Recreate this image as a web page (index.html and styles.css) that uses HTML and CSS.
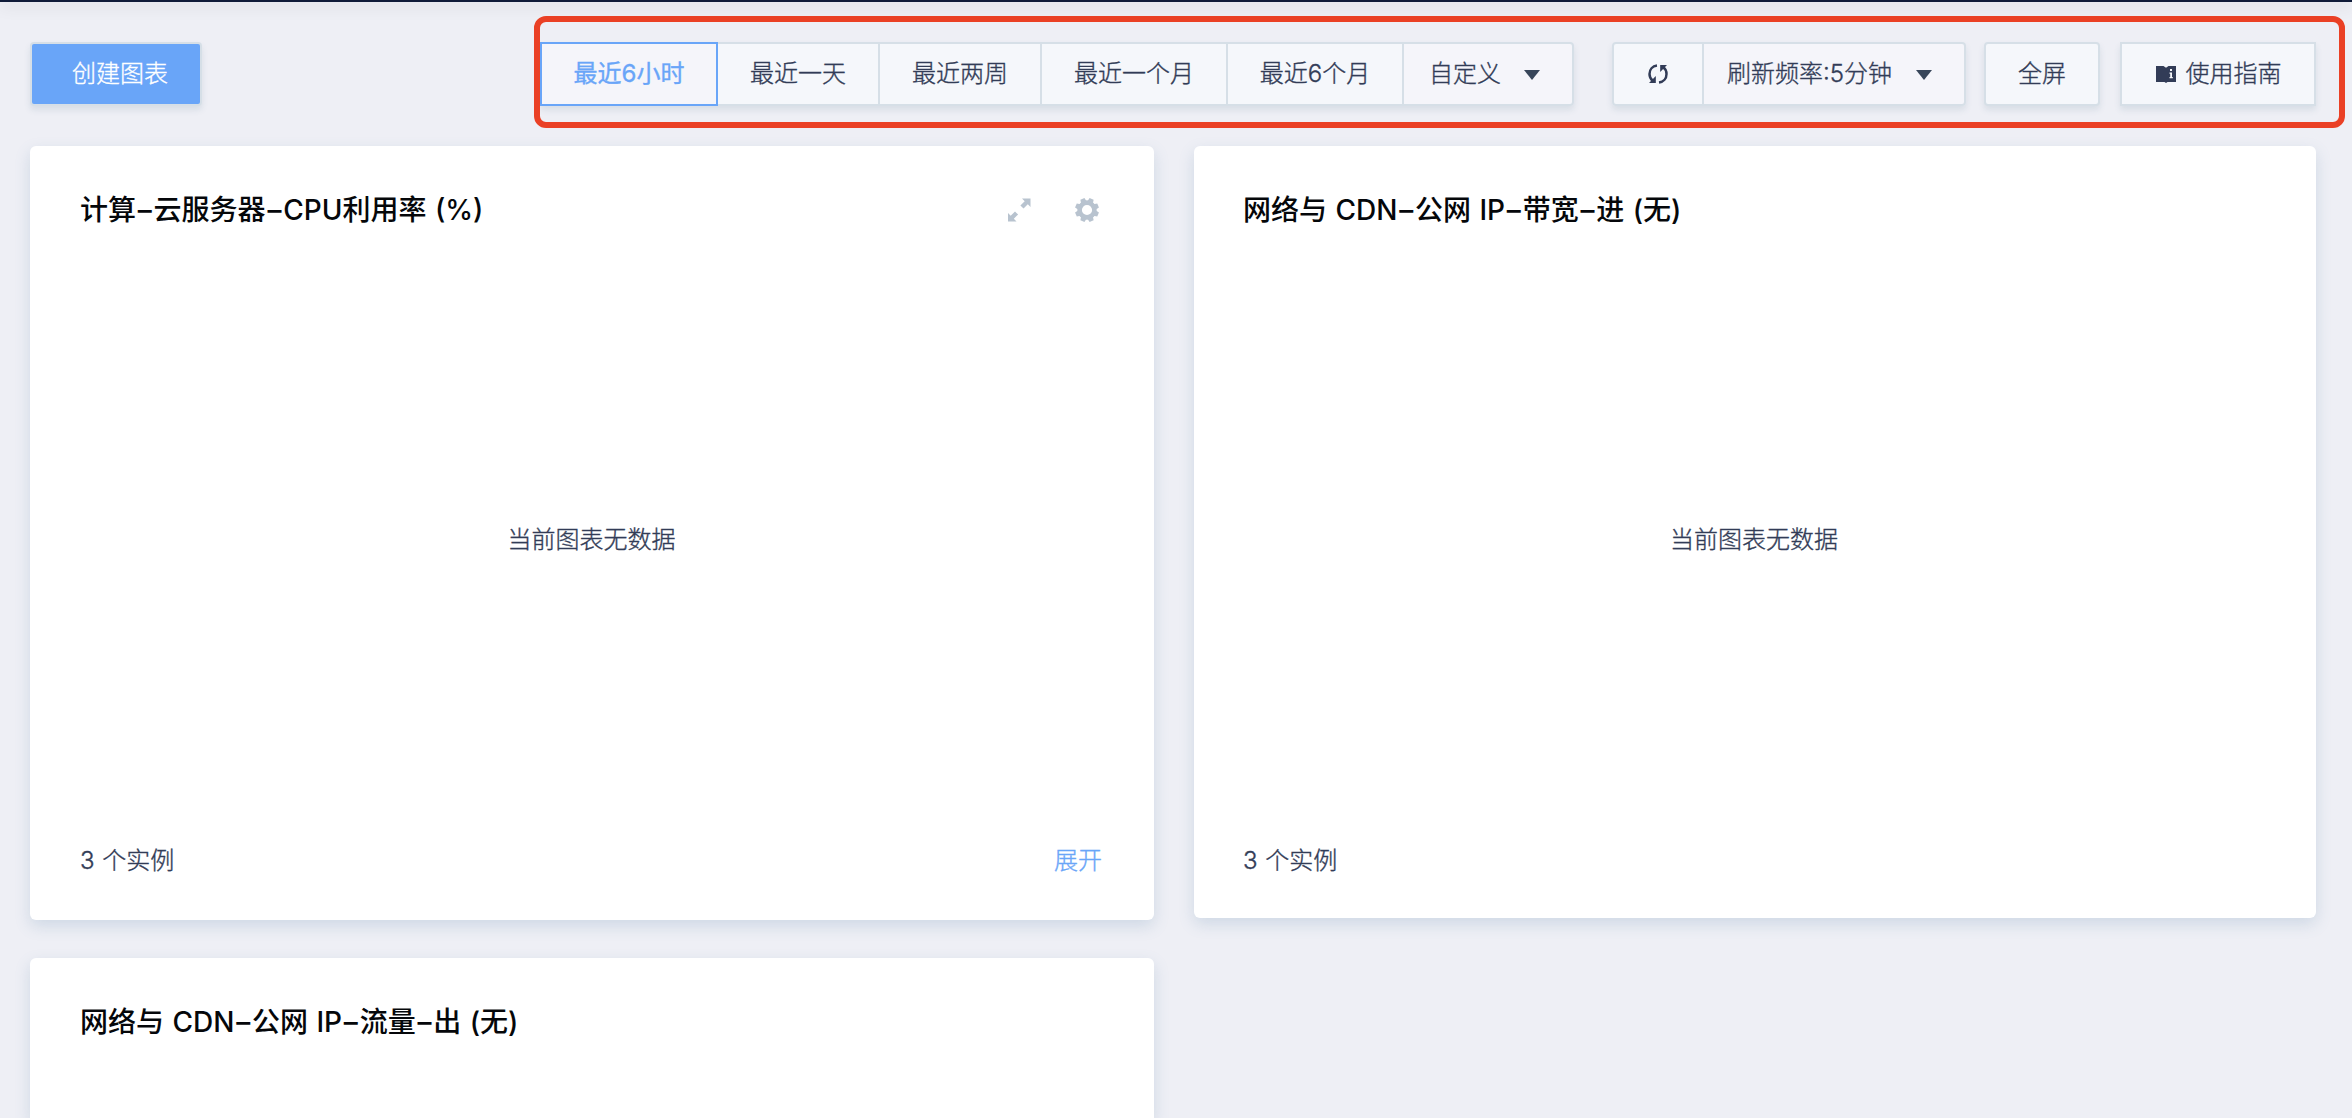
FILE: index.html
```html
<!DOCTYPE html>
<html lang="zh-CN">
<head>
<meta charset="utf-8">
<title>云监控</title>
<link rel="stylesheet" href="styles.css">
</head>
<body>
<div class="screen">
<div class="topbar"></div>
<main class="page">
  <header class="toolbar">
    <button class="btn btn-primary">创建图表</button>
    <div class="controls">
      <div class="group ranges">
        <button class="seg w-6h active">最近6小时</button>
        <button class="seg w-1d">最近一天</button>
        <button class="seg w-2w">最近两周</button>
        <button class="seg w-1m">最近一个月</button>
        <button class="seg w-6m">最近6个月</button>
        <button class="seg select w-custom"><span>自定义</span><i class="caret"></i></button>
      </div>
      <div class="group refresh">
        <button class="seg w-icon" aria-label="刷新">
          <svg width="20" height="20" viewBox="0 0 20 20"><path d="M9 1.500C4.500 2 1.500 5.500 1.500 10c0 3 1.200 5.200 3.200 6.700" fill="none" stroke="#323c57" stroke-width="2.500"/><path d="M1 18.900h6.800V12z" fill="#323c57"/><path d="M11 18.500c4.500-.5 7.500-4 7.500-8.500 0-3-1.200-5.200-3.200-6.700" fill="none" stroke="#323c57" stroke-width="2.500"/><path d="M19 1.100h-6.800V8z" fill="#323c57"/></svg>
        </button>
        <button class="seg select w-rate"><span class="rate">刷新频率:5分钟</span><i class="caret"></i></button>
      </div>
      <button class="btn full">全屏</button>
      <button class="btn guide">
        <svg width="20" height="17" viewBox="0 0 20 17"><path d="M0 0h7.500L10 1.800 12.500 0H20v16h-8.500L10 17l-1.500-1H0z" fill="#323c57"/><path d="M14 3h2v2h-2zM13.500 6.500H16V11h.8v1.300h-3.300V11h.7V7.800h-.7z" fill="#f5f7fb"/></svg>
        <span>使用指南</span>
      </button>
      <div class="highlight"></div>
    </div>
  </header>
  <section class="grid">
    <article class="card tall">
      <div class="card-head"><h2>计算<span class="dash">–</span>云服务器<span class="dash">–</span>CPU利用率 (%)</h2>
        <div class="tools">
          <svg width="24" height="24" viewBox="0 0 24 24" fill="#b8c3cf"><path d="M15 .5h8.500V9l-2.700-2.700-4.300 4.300-3.100-3.100 4.300-4.300z"/><path d="M9.500 23.500H1V15l2.700 2.700L8 13.400l3.100 3.100-4.300 4.300z"/></svg>
          <svg width="24" height="24" viewBox="0 0 24 24"><circle cx="12" cy="12" r="7.400" fill="none" stroke="#b8c3cf" stroke-width="4.600"/><g fill="#b8c3cf" transform="rotate(22.500 12 12)"><path id="tooth" d="M9 4l.8-4h4.400l.8 4z"/><use href="#tooth" transform="rotate(45 12 12)"/><use href="#tooth" transform="rotate(90 12 12)"/><use href="#tooth" transform="rotate(135 12 12)"/><use href="#tooth" transform="rotate(180 12 12)"/><use href="#tooth" transform="rotate(225 12 12)"/><use href="#tooth" transform="rotate(270 12 12)"/><use href="#tooth" transform="rotate(315 12 12)"/></g></svg>
        </div>
      </div>
      <div class="empty">当前图表无数据</div>
      <div class="card-foot"><span>3 个实例</span><a class="link">展开</a></div>
    </article>
    <article class="card second">
      <div class="card-head"><h2>网络与 CDN<span class="dash">–</span>公网 IP<span class="dash">–</span>带宽<span class="dash">–</span>进 (无)</h2></div>
      <div class="empty">当前图表无数据</div>
      <div class="card-foot"><span>3 个实例</span></div>
    </article>
    <article class="card">
      <div class="card-head"><h2>网络与 CDN<span class="dash">–</span>公网 IP<span class="dash">–</span>流量<span class="dash">–</span>出 (无)</h2></div>
    </article>
  </section>
</main>
</div>
</body>
</html>
```
FILE: styles.css
```css
* { box-sizing: border-box; }
body {
  margin: 0;
  background: #eeeff5;
  color: #323c57;
  font: 300 24px/34px Inter, "Noto Sans CJK SC", sans-serif;
  -webkit-text-stroke: .35px currentColor;
}
.screen { height: 1118px; overflow: hidden; display: flex; flex-direction: column; }
.topbar { flex: none; height: 2px; background: #0f1a38; box-shadow: 0 2px 16px rgba(0, 10, 20, .3); }
.page { flex: 1; min-height: 0; display: flex; flex-direction: column; padding: 40px 36px 0 30px; }
.toolbar { flex: none; display: flex; justify-content: space-between; height: 64px; }
.controls { display: flex; position: relative; }
button { font: inherit; color: inherit; margin: 0; white-space: nowrap; }
.btn, .seg {
  height: 64px;
  display: flex;
  align-items: center;
  justify-content: center;
  background: #f5f7fb;
  border: 2px solid #d6dfe7;
  padding: 0;
}
.btn { border-radius: 4px; box-shadow: 0 4px 6px rgba(60, 100, 120, .12); }
.btn-primary { width: 172px; padding-left: 8px; background: #69a5f8; color: #fff; }
.group { display: flex; border-radius: 4px; box-shadow: 0 4px 6px rgba(60, 100, 120, .12); }
.seg { border-left-width: 0; }
.seg:first-child { border-left-width: 2px; border-radius: 4px 0 0 4px; }
.seg:last-child { border-radius: 0 4px 4px 0; }
.seg.active { border-color: #69a5f8; border-radius: 0; color: #69a5f8; font-weight: 400; background: #f5f5fa; }
.w-6h { width: 178px; }
.w-1d { width: 162px; }
.w-2w { width: 162px; }
.w-1m { width: 186px; }
.w-6m { width: 176px; }
.w-custom { width: 170px; }
.w-icon { width: 92px; }
.w-rate { width: 262px; }
.select { justify-content: space-between; padding-left: 25px; padding-right: 32px; background: #f5f5fa; }
.w-rate.select { padding-left: 23px; padding-right: 32px; }
.caret { width: 16px; height: 10px; background: #38465a; clip-path: polygon(0 0, 100% 0, 50% 100%); margin-top: 2px; }
.refresh { margin-left: 38px; }
.full { width: 116px; margin-left: 18px; }
.guide { width: 196px; margin-left: 20px; padding-left: 1px; gap: 10px; border-radius: 0; }
.highlight { position: absolute; left: -6px; top: -26px; width: 1811px; height: 112px; border: 6px solid #ea4025; border-radius: 12px; }
.grid {
  display: grid;
  flex: 1;
  min-height: 0;
  grid-template-columns: 1124px 1122px;
  grid-template-rows: 774px minmax(0, 1fr);
  gap: 38px 40px;
  margin-top: 40px;
}
.card {
  background: #fff;
  border-radius: 6px 6px 0 0;
  box-shadow: 0 6px 16px rgba(80, 125, 165, .2);
  padding: 44px 52px 0 50px;
}
.tall { border-radius: 6px; }
.second { height: 772px; padding-left: 49px; border-radius: 6px; }
.card-head { display: flex; justify-content: space-between; align-items: center; height: 40px; }
h2 { margin: 0; font-size: 28px; line-height: 40px; font-weight: 500; word-spacing: 1px; color: #05070a; white-space: nowrap; -webkit-text-stroke: 0; }
.dash { padding: 0 1.8px; }
.tools { display: flex; gap: 44px; padding-right: 3px; }
.empty { height: 614px; padding: 5px 0 0 1px; display: flex; align-items: center; justify-content: center; }
.card-foot { display: flex; justify-content: space-between; word-spacing: 1px; }
.link { color: #69a5f8; }
```
